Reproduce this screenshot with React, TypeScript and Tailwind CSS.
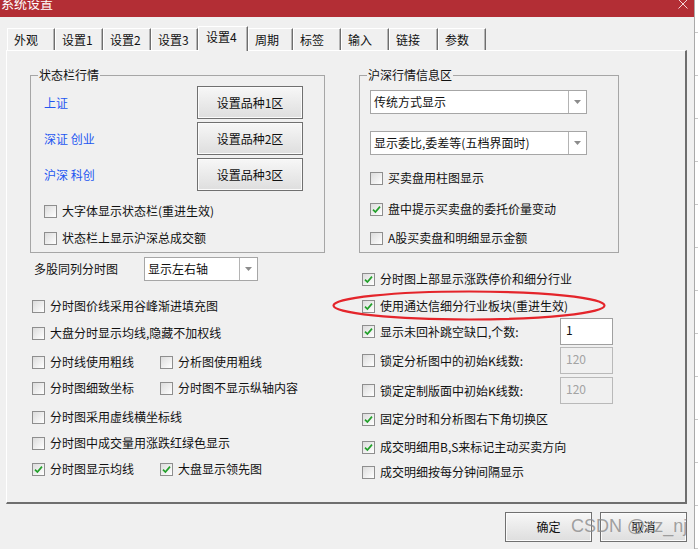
import React from 'react'

const TABS = [
  { label: '外观', w: 'w-[48px]' },
  { label: '设置1', w: 'w-[48px]' },
  { label: '设置2', w: 'w-[48px]' },
  { label: '设置3', w: 'w-[47px]' },
  { label: '设置4', w: 'w-[50px]', active: true },
  { label: '周期', w: 'w-[45px]' },
  { label: '标签', w: 'w-[48px]' },
  { label: '输入', w: 'w-[48px]' },
  { label: '链接', w: 'w-[49px]' },
  { label: '参数', w: 'w-[48px]' },
]

const LEFT_ROWS = [
  { mt: 'mt-[15px]', items: [{ label: '分时图价线采用谷峰渐进填充图' }] },
  { mt: 'mt-[7px]', items: [{ label: '大盘分时显示均线,隐藏不加权线' }] },
  { mt: 'mt-[9px]', items: [{ label: '分时线使用粗线' }, { label: '分析图使用粗线' }] },
  { mt: 'mt-[6px]', items: [{ label: '分时图细致坐标' }, { label: '分时图不显示纵轴内容' }] },
  { mt: 'mt-[9px]', items: [{ label: '分时图采用虚线横坐标线' }] },
  { mt: 'mt-[6px]', items: [{ label: '分时图中成交量用涨跌红绿色显示' }] },
  { mt: 'mt-[6px]', items: [{ label: '分时图显示均线', on: true }, { label: '大盘显示领先图', on: true }] },
]

const RIGHT_ROWS: { mt: string; label: string; on?: boolean; input?: string; disabled?: boolean }[] = [
  { mt: 'mt-[16px]', label: '分时图上部显示涨跌停价和细分行业', on: true },
  { mt: 'mt-[7px]', label: '使用通达信细分行业板块(重进生效)', on: true },
  { mt: 'mt-[2px]', label: '显示未回补跳空缺口,个数:', on: true, input: '1' },
  { mt: 'mt-[2px]', label: '锁定分析图中的初始K线数:', input: '120', disabled: true },
  { mt: 'mt-[3px]', label: '锁定定制版面中初始K线数:', input: '120', disabled: true },
  { mt: 'mt-[5px]', label: '固定分时和分析图右下角切换区', on: true },
  { mt: 'mt-[8px]', label: '成交明细用B,S来标记主动买卖方向', on: true },
  { mt: 'mt-[5px]', label: '成交明细按每分钟间隔显示' },
]

const STOCK_ROWS = [
  { label: '上证', btn: '设置品种1区' },
  { label: '深证 创业', btn: '设置品种2区' },
  { label: '沪深 科创', btn: '设置品种3区' },
]

function Box({ on }: { on?: boolean }) {
  return (
    <span className="w-[13px] h-[13px] shrink-0 border border-[#8e8e8e] bg-linear-to-br from-[#dcdcdc] to-white flex items-center justify-center">
      {on && (
        <svg width="9" height="9" viewBox="0 0 9 9">
          <path d="M1 4.6 L3.4 7 L8 1.6" stroke="#22a02a" strokeWidth="1.7" fill="none" />
        </svg>
      )}
    </span>
  )
}

function Check({ label, on }: { label: string; on?: boolean }) {
  return (
    <span className="flex items-center gap-[5px] whitespace-nowrap">
      <Box on={on} />
      <span>{label}</span>
    </span>
  )
}

function Combo({ text, w }: { text: string; w: string }) {
  return (
    <div className={`${w} h-[24px] bg-white border border-[#a6a6a6] flex`}>
      <span className="flex-1 pl-[3px] leading-[22px] whitespace-nowrap overflow-hidden">{text}</span>
      <span className="w-[18px] border-l border-[#b4b4b4] flex items-center justify-center">
        <svg width="7" height="4" viewBox="0 0 7 4">
          <path d="M0 0h7L3.5 4z" fill="#8c8c8c" />
        </svg>
      </span>
    </div>
  )
}

function Btn({ children, cls }: { children: React.ReactNode; cls: string }) {
  return (
    <button className={`${cls} border border-[#707070] bg-linear-to-b from-[#f7f7f7] to-[#dedede] shadow-[inset_0_0_0_1px_#fbfbfb] flex items-center justify-center`}>
      {children}
    </button>
  )
}

export default function App() {
  return (
    <div className="relative w-[698px] h-[549px] overflow-hidden flex bg-white text-[12px] leading-[16px] text-[#111] font-['Noto_Sans_CJK_SC','Microsoft_YaHei',sans-serif]">
      {/* ── dialog window ── */}
      <div className="w-[695px] shrink-0 flex flex-col bg-[#f0f0f0] border-r border-[#a9a9a9]">
        <div className="h-[17px] bg-[#b32e35] flex justify-between overflow-hidden">
          <span className="text-white text-[13px] leading-[14px] -mt-[4px] pl-[1px]">系统设置</span>
          <svg width="10" height="10" viewBox="0 0 10 10" className="mr-[6px] -mt-[1px]">
            <path d="M0.5 0.5 L9.5 9.5 M9.5 0.5 L0.5 9.5" stroke="#f4d6d8" strokeWidth="1" />
          </svg>
        </div>

        {/* ── tabs ── */}
        <div className="pt-[9px] pl-[7px] h-[33px] flex items-end">
          {TABS.map((t) => (
            <div
              key={t.label}
              className={`${t.w} shrink-0 border-t border-l border-white border-r border-r-[#6e6e6e] shadow-[inset_-1px_0_0_#b5b5b5] bg-[#f0f0f0] ${t.active ? 'h-[25px] -mb-px relative z-10 pl-[7px] leading-[20px]' : 'h-[22px] pl-[6px] leading-[21px]'}`}
            >
              {t.label}
            </div>
          ))}
        </div>

        {/* ── tab panel ── */}
        <div className="ml-[6px] w-[681px] h-[454px] border-t border-l border-white border-r-2 border-b-2 border-r-[#6e6e6e] border-b-[#6e6e6e] flex flex-col">
          <div className="flex pl-[23px] mt-[17px] gap-[34px]">
            <fieldset className="w-[295px] border border-[#a6a6a6] pt-[4px] pb-[4px]">
              <legend className="ml-[7px] px-px leading-[14px]">状态栏行情</legend>
              <div className="flex flex-col gap-[3px]">
                {STOCK_ROWS.map((r) => (
                  <div key={r.btn} className="flex items-center justify-between pl-[13px] pr-[21px]">
                    <span className="text-[#2457f0]">{r.label}</span>
                    <Btn cls="w-[106px] h-[33px]">{r.btn}</Btn>
                  </div>
                ))}
              </div>
              <div className="pl-[13px] mt-[10px] h-[20px] flex items-center">
                <Check label="大字体显示状态栏(重进生效)" />
              </div>
              <div className="pl-[13px] mt-[7px] h-[20px] flex items-center">
                <Check label="状态栏上显示沪深总成交额" />
              </div>
            </fieldset>

            <fieldset className="w-[260px] border border-[#a6a6a6] pl-[10px] pt-[8px] pb-[4px]">
              <legend className="ml-[-3px] px-px leading-[14px]">沪深行情信息区</legend>
              <Combo text="传统方式显示" w="w-[217px]" />
              <div className="mt-[17px]">
                <Combo text="显示委比,委差等(五档界面时)" w="w-[217px]" />
              </div>
              <div className="mt-[13px] h-[20px] flex items-center">
                <Check label="买卖盘用柱图显示" />
              </div>
              <div className="mt-[11px] h-[20px] flex items-center">
                <Check label="盘中提示买卖盘的委托价量变动" on />
              </div>
              <div className="mt-[9px] h-[20px] flex items-center">
                <Check label="A股买卖盘和明细显示金额" />
              </div>
            </fieldset>
          </div>

          <div className="flex pl-[23px]">
            <div className="w-[329px] flex flex-col">
              <div className="mt-[3px] h-[25px] flex items-center pl-[4px]">
                <span className="w-[110px]">多股同列分时图</span>
                <Combo text="显示左右轴" w="w-[114px]" />
              </div>
              {LEFT_ROWS.map((r, i) => (
                <div key={i} className={`${r.mt} h-[20px] flex items-center pl-[2px]`}>
                  {r.items.map((it, j) => (
                    <span key={it.label} className={j === 0 ? 'w-[128px]' : ''}>
                      <Check label={it.label} on={it.on} />
                    </span>
                  ))}
                </div>
              ))}
            </div>

            <div className="flex flex-col pl-[3px]">
              {RIGHT_ROWS.map((r) => (
                <div key={r.label} className={`${r.mt} ${r.input ? 'h-[27px]' : 'h-[20px]'} w-[251px] flex items-center`}>
                  <Check label={r.label} on={r.on} />
                  {r.input && (
                    <span
                      className={`ml-auto w-[53px] h-[27px] border pl-[5px] pt-[3px] leading-[16px] self-start ${r.disabled ? 'bg-[#f0f0f0] border-[#b9b9b9] text-[#a3a3a3]' : 'bg-white border-[#a0a0a0] text-[#111]'}`}
                    >
                      {r.input}
                    </span>
                  )}
                </div>
              ))}
            </div>
          </div>
        </div>

        {/* ── dialog buttons ── */}
        <div className="mt-[8px] flex justify-end gap-[8px] pr-[7px]">
          <Btn cls="w-[87px] h-[30px]">确定</Btn>
          <Btn cls="w-[87px] h-[30px]">取消</Btn>
        </div>
      </div>

      {/* ── window behind ── */}
      <div className="flex-1 flex flex-col bg-white">
        <div className="h-[33px] shrink-0 border-b border-[#c8c8c8]" />
        {Array.from({ length: 12 }).map((_, i) => (
          <div key={i} className="h-[43px] shrink-0 border-b border-[#c8c8c8]" />
        ))}
      </div>

      {/* red annotation ellipse */}
      <svg className="absolute left-[331px] top-[289px] pointer-events-none" width="276" height="33" viewBox="0 0 276 33">
        <ellipse cx="138" cy="16.5" rx="135.5" ry="14" fill="none" stroke="#e4252b" strokeWidth="2.2" />
      </svg>

      {/* watermark */}
      <span className="absolute left-[571px] top-[515px] text-[18px] leading-[22px] text-[#8a8a8a]/80 font-['Liberation_Sans',sans-serif] pointer-events-none">
        CSDN @zz_nj
      </span>
    </div>
  )
}
